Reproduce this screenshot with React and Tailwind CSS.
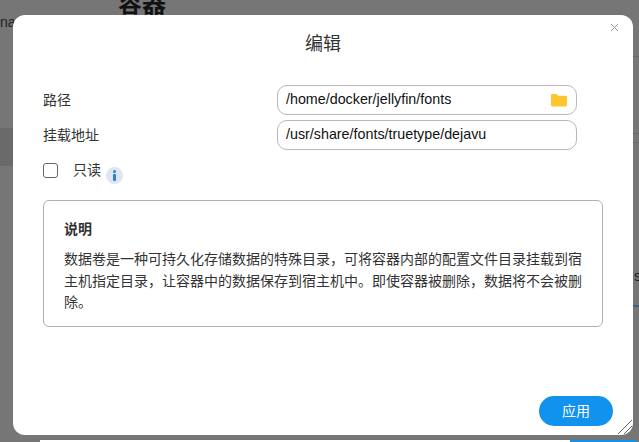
import React from 'react';

const font = { fontFamily: '"Liberation Sans", "Noto Sans CJK SC", sans-serif' };

const Backdrop = () => (
  <div className="absolute inset-0 overflow-hidden bg-[#767676]">
    <div className="absolute left-[118px] top-[-11px] text-[24px] leading-[30px] font-bold text-[#111]">容器</div>
    <div className="absolute left-0 top-[14px] text-[14px] leading-[16px] text-[#222]">na</div>
    <div className="absolute left-0 top-[128px] w-[13px] h-[38px] bg-[#6a6a6a]" />
    <div className="absolute left-[633px] top-[56px] w-[6px] h-px bg-[#666]" />
    <div className="absolute left-[633px] top-[133px] w-[6px] h-px bg-[#666]" />
    <div className="absolute left-[633px] top-[142px] w-[6px] h-px bg-[#666]" />
    <div className="absolute left-[634px] top-[268px] text-[14px] leading-[16px] text-[#222]">s</div>
    <div className="absolute left-[633px] top-[305px] w-[6px] h-[2px] bg-[#3f6280]" />
    <div className="absolute left-[40px] top-[440px] w-[530px] h-[2px] bg-white" />
    <div className="absolute left-[570px] top-[440px] w-[66px] h-[2px] bg-[#1092ee]" />
  </div>
);

const Field = ({ label, value, folder }) => (
  <div className="flex items-center justify-between h-[30px] w-[534px]">
    <span className="text-[14px] text-[#333]">{label}</span>
    <div className="w-[300px] h-[30px] border border-[#b8b8b8] rounded-[10px] flex items-center justify-between pl-[8px] pr-[9px]">
      <span className="text-[14.300px] text-[#111]">{value}</span>
      {folder && (
        <svg width="16" height="14" viewBox="0 0 17 14">
          <path d="M0 2a1.5 1.5 0 0 1 1.5-1.5h4L7.5 2.500h8A1.500 1.500 0 0 1 17 4v8.500a1.500 1.500 0 0 1-1.500 1.500h-14A1.500 1.500 0 0 1 0 12.500z" fill="#fdc62f" />
        </svg>
      )}
    </div>
  </div>
);

export default function App() {
  return (
    <div className="relative w-[639px] h-[442px] overflow-hidden" style={font}>
      <Backdrop />

      <div className="absolute left-[13px] top-[15px] w-[620px] h-[420px] bg-white rounded-[12px] flex flex-col px-[30px]">
        {/* cerrar */}
        <svg className="absolute right-[14px] top-[8px]" width="9" height="9" viewBox="0 0 9 9" stroke="#999" strokeWidth="1" fill="none">
          <path d="M1 1l7 7M8 1l-7 7" />
        </svg>

        <h2 className="text-center text-[18px] leading-[26px] text-[#333] mt-[16px]">编辑</h2>

        <div className="mt-[28px] flex flex-col gap-[5px]">
          <Field label="路径" value="/home/docker/jellyfin/fonts" folder />
          <Field label="挂载地址" value="/usr/share/fonts/truetype/dejavu" />
        </div>

        <div className="flex items-start mt-[10px] h-[30px]">
          <div className="w-[15px] h-[15px] mt-[3px] border border-[#666] rounded-[3px]" />
          <span className="ml-[15px] text-[14px] leading-[20px] text-[#333]">只读</span>
          <div className="ml-[5px] mt-[7px] w-[17px] h-[17px] rounded-full bg-[#dfe6ef] flex flex-col items-center justify-center gap-[1px]">
            <div className="w-[3px] h-[3px] rounded-full bg-[#2a7fe0]" />
            <div className="w-[3px] h-[7px] rounded-[1px] bg-[#2a7fe0]" />
          </div>
        </div>

        <div className="mt-[10px] w-full h-[127px] border border-[#b0b0b0] rounded-[6px] px-[20px] pt-[18px]">
          <div className="text-[14px] leading-[20px] font-bold text-[#333]">说明</div>
          <p className="mt-[10px] text-[14px] leading-[21.500px] text-[#333]">
            {'数据卷是一种可持久化存储数据的特殊目录\uFF0C可将容器内部的配置文件目录挂载到宿主机指定目录\uFF0C让容器中的数据保存到宿主机中。即使容器被删除\uFF0C数据将不会被删除。'}
          </p>
        </div>

        <div className="mt-auto mb-[9px] flex justify-end -mr-[10px]">
          <button className="w-[74px] h-[30px] rounded-full bg-[#1092ee] text-white text-[14px]">应用</button>
        </div>

        {/* resize handle */}
        <svg className="absolute right-0 bottom-0" width="16" height="16" viewBox="0 0 16 16" stroke="#666" strokeWidth="1" fill="none">
          <path d="M1 15L15 1M7 15l8-8" />
        </svg>
      </div>
    </div>
  );
}
